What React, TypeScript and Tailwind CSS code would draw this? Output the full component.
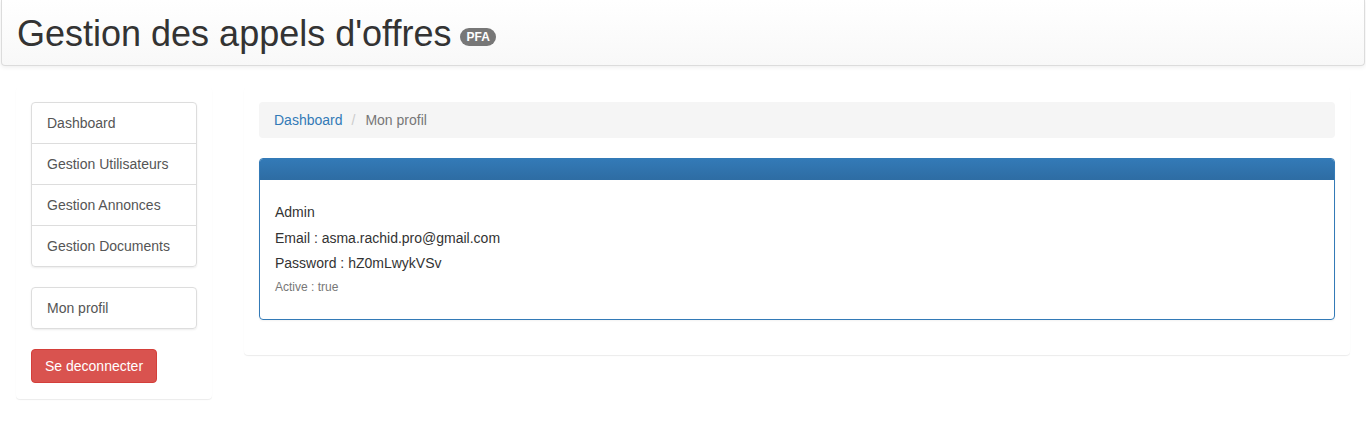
import React from "react";

export default function App() {
  const font = { fontFamily: '"Liberation Sans", Arial, Helvetica, sans-serif' };
  return (
    <div className="min-h-[447px] bg-white text-[14px] leading-[20px] text-[#333]" style={font}>
      <div className="mx-px mb-[21px] flex h-[66px] items-center rounded-b-[4px] border border-t-0 border-[#dcdcdc] bg-gradient-to-b from-white to-[#f8f8f8] pl-[15px] pt-[3px] shadow-[0_1px_5px_rgba(0,0,0,0.08)]">
        <h1 className="flex items-center text-[36px] leading-[40px] font-normal text-[#333]">
          Gestion des appels d'offres
          <span className="ml-[9px] mt-[6px] inline-flex h-[18px] items-center rounded-[10px] bg-[#777] px-[6px] text-[12px] leading-none font-bold text-white">
            PFA
          </span>
        </h1>
      </div>
      <div className="flex items-start px-4">
        <div className="w-[196px] rounded-[4px] bg-white p-[15px] pb-[16px] shadow-[0_1px_1px_rgba(0,0,0,0.08)]">
          <div className="rounded-[4px] border border-[#ddd] shadow-[0_1px_2px_rgba(0,0,0,0.075)]">
            {["Dashboard", "Gestion Utilisateurs", "Gestion Annonces", "Gestion Documents"].map((t, i) => (
              <div key={t} className={`px-[15px] py-[10px] text-[#555] ${i > 0 ? "border-t border-[#ddd]" : ""}`}>
                {t}
              </div>
            ))}
          </div>
          <div className="mt-[20px] rounded-[4px] border border-[#ddd] shadow-[0_1px_2px_rgba(0,0,0,0.075)]">
            <div className="px-[15px] py-[10px] text-[#555]">Mon profil</div>
          </div>
          <button className="mt-[20px] h-[34px] rounded-[4px] border border-[#d43f3a] bg-[#d9534f] px-[13px] text-[14px] text-white">
            Se deconnecter
          </button>
        </div>
        <div className="ml-[32px] flex-1 rounded-[4px] bg-white p-[15px] shadow-[0_1px_1px_rgba(0,0,0,0.08)]">
          <div className="mb-[20px] flex h-[36px] items-center rounded-[4px] bg-[#f5f5f5] px-[15px]">
            <span className="text-[#337ab7]">Dashboard</span>
            <span className="pl-[9px] pr-[10px] text-[#ccc]">/</span>
            <span className="text-[#777]">Mon profil</span>
          </div>
          <div className="mb-[20px] overflow-hidden rounded-[4px] border border-[#337ab7] shadow-[0_1px_2px_rgba(0,0,0,0.05)]">
            <div className="h-[21px] border-b border-[#2e6da4] bg-gradient-to-b from-[#337ab7] to-[#2e6da4]" />
            <div className="px-[15px] pt-[22px] pb-[23px]">
              <div>Admin</div>
              <div className="mt-[6px]">Email : asma.rachid.pro@gmail.com</div>
              <div className="mt-[5px]">Password : hZ0mLwykVSv</div>
              <div className="mt-[6px] text-[12px] leading-[17px] text-[#777]">Active : true</div>
            </div>
          </div>
        </div>
      </div>
    </div>
  );
}
